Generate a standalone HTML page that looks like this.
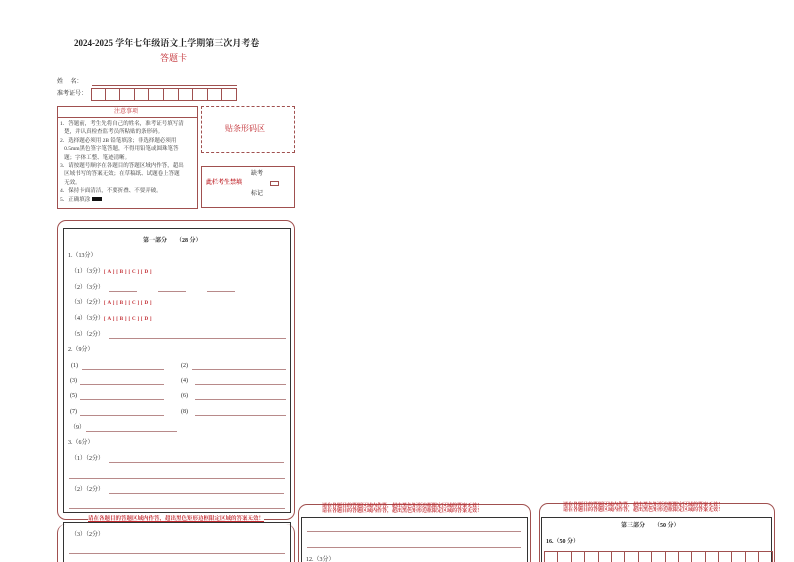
<!DOCTYPE html>
<html><head><meta charset="utf-8"><style>
*{margin:0;padding:0;box-sizing:border-box}
html,body{width:794px;height:562px;overflow:hidden}
body{background:#fff;position:relative;font-family:"Liberation Serif","Noto Serif CJK SC","Noto Sans CJK SC",serif;color:#222}
.a{position:absolute;white-space:nowrap}
.t{font-size:6px;line-height:7px}
.r{color:#c0272d}
.ln{position:absolute;height:0;border-top:1px solid #b88a8a}
.box{position:absolute;border:1px solid #a0504f}
.blk{position:absolute;border:1.2px solid #333}
.opt{color:#c0272d;font-size:5px;font-weight:bold;letter-spacing:0.3px}
.g{width:13.4px;height:20px;border-right:1px solid #a0504f}
</style></head><body>
<div class="a" style="left:74px;top:36px;font-size:9px;font-weight:bold">2024-2025 学年七年级语文上学期第三次月考卷</div>
<div class="a r" style="left:160px;top:51px;font-size:9px">答题卡</div>
<div class="a t" style="left:57px;top:79px">姓&nbsp;&nbsp;&nbsp;&nbsp;&nbsp;名：</div>
<div class="ln" style="left:92px;top:85px;width:145px;border-color:#a0504f"></div>
<div class="a t" style="left:57px;top:91px">准考证号：</div>
<div class="a" style="left:91px;top:88px;display:flex">
<div style="width:14.6px;height:13px;border:1px solid #a0504f"></div><div style="width:14.6px;height:13px;border:1px solid #a0504f;border-left:0"></div><div style="width:14.6px;height:13px;border:1px solid #a0504f;border-left:0"></div><div style="width:14.6px;height:13px;border:1px solid #a0504f;border-left:0"></div><div style="width:14.6px;height:13px;border:1px solid #a0504f;border-left:0"></div><div style="width:14.6px;height:13px;border:1px solid #a0504f;border-left:0"></div><div style="width:14.6px;height:13px;border:1px solid #a0504f;border-left:0"></div><div style="width:14.6px;height:13px;border:1px solid #a0504f;border-left:0"></div><div style="width:14.6px;height:13px;border:1px solid #a0504f;border-left:0"></div><div style="width:14.6px;height:13px;border:1px solid #a0504f;border-left:0"></div></div>
<div class="box" style="left:57px;top:106px;width:141px;height:103px"></div>
<div class="ln" style="left:57px;top:117px;width:141px;border-color:#a0504f"></div>
<div class="a r t" style="left:114px;top:109px">注意事项</div>
<div class="a" style="left:60px;top:120px;font-size:5.5px;line-height:8.4px;color:#333">1．答题前，考生先将自己的姓名，准考证号填写清<br>&nbsp;&nbsp;&nbsp;楚，并认真检查监考员所粘贴的条形码。<br>2．选择题必须用 2B 铅笔填涂；非选择题必须用<br>&nbsp;&nbsp;&nbsp;0.5mm黑色签字笔答题，不得用铅笔或圆珠笔答<br>&nbsp;&nbsp;&nbsp;题；字体工整、笔迹清晰。<br>3．请按题号顺序在各题目的答题区域内作答，超出<br>&nbsp;&nbsp;&nbsp;区域书写的答案无效；在草稿纸、试题卷上答题<br>&nbsp;&nbsp;&nbsp;无效。<br>4．保持卡面清洁，不要折叠、不要弄破。<br>5．正确填涂 <span style="display:inline-block;width:10px;height:4px;background:#111"></span></div>
<div class="a" style="left:201px;top:106px;width:94px;height:47px;border:1px dashed #a0504f"></div>
<div class="a r" style="left:225px;top:123px;font-size:8px">贴条形码区</div>
<div class="box" style="left:201px;top:166px;width:94px;height:42px"></div>
<div class="a t" style="left:251px;top:171px">缺考</div>
<div class="a r t" style="left:206px;top:180px;font-weight:bold">此栏考生禁填</div>
<div class="a" style="left:270px;top:181px;width:9px;height:5px;border:1px solid #a0504f"></div>
<div class="a t" style="left:251px;top:191px">标记</div>

<div class="box" style="left:57px;top:220px;width:238px;height:300px;border-radius:9px"></div>
<div class="blk" style="left:63px;top:228px;width:228px;height:285px;background:#fff"></div>
<div class="a t" style="left:143px;top:238px;font-weight:bold">第一部分&nbsp;&nbsp;&nbsp;&nbsp;&nbsp;&nbsp;（28 分）</div>
<div class="a t" style="left:68px;top:253px">1.（13分）</div>
<div class="a t" style="left:71px;top:269px">（1）（3分）<span class="opt">[ A ] [ B ] [ C ] [ D ]</span></div>
<div class="a t" style="left:71px;top:285px">（2）（3分）</div>
<div class="ln" style="left:109px;top:291px;width:28px"></div><div class="ln" style="left:158px;top:291px;width:28px"></div><div class="ln" style="left:207px;top:291px;width:28px"></div>
<div class="a t" style="left:71px;top:300px">（3）（2分）<span class="opt">[ A ] [ B ] [ C ] [ D ]</span></div>
<div class="a t" style="left:71px;top:316px">（4）（3分）<span class="opt">[ A ] [ B ] [ C ] [ D ]</span></div>
<div class="a t" style="left:71px;top:332px">（5）（2分）</div>
<div class="ln" style="left:109px;top:338px;width:177px"></div>
<div class="a t" style="left:68px;top:347px">2.（9分）</div>
<div class="a t" style="left:71px;top:363px">(1)</div><div class="ln" style="left:82px;top:369px;width:82px"></div>
<div class="a t" style="left:181px;top:363px">(2)</div><div class="ln" style="left:192px;top:369px;width:94px"></div>
<div class="a t" style="left:70px;top:378px">(3)</div><div class="ln" style="left:80px;top:384px;width:84px"></div>
<div class="a t" style="left:181px;top:378px">(4)</div><div class="ln" style="left:195px;top:384px;width:91px"></div>
<div class="a t" style="left:70px;top:393px">(5)</div><div class="ln" style="left:80px;top:399px;width:84px"></div>
<div class="a t" style="left:181px;top:393px">(6)</div><div class="ln" style="left:195px;top:399px;width:91px"></div>
<div class="a t" style="left:70px;top:409px">(7)</div><div class="ln" style="left:80px;top:415px;width:84px"></div>
<div class="a t" style="left:181px;top:409px">(8)</div><div class="ln" style="left:195px;top:415px;width:91px"></div>
<div class="a t" style="left:70px;top:425px">（9）</div><div class="ln" style="left:86px;top:431px;width:91px"></div>
<div class="a t" style="left:68px;top:440px">3.（6分）</div>
<div class="a t" style="left:71px;top:456px">（1）（2分）</div><div class="ln" style="left:109px;top:462px;width:175px"></div>
<div class="ln" style="left:69px;top:478px;width:216px"></div>
<div class="a t" style="left:71px;top:487px">（2）（2分）</div><div class="ln" style="left:109px;top:493px;width:175px"></div>
<div class="ln" style="left:69px;top:508px;width:216px"></div>
<div class="a" style="left:88px;top:514px;font-size:5.5px;color:#c0272d;font-weight:bold;text-decoration:underline;background:#fff">请在各题目的答题区域内作答，超出黑色矩形边框限定区域的答案无效！</div>
<div class="box" style="left:57px;top:524px;width:238px;height:40px;border-radius:9px 9px 0 0;border-top:none"></div>
<div class="blk" style="left:63px;top:522px;width:228px;height:42px"></div>
<div class="a t" style="left:71px;top:532px">（3）（2分）</div>
<div class="ln" style="left:69px;top:553px;width:216px"></div>

<div class="box" style="left:298px;top:504px;width:233px;height:60px;border-radius:9px 9px 0 0"></div>
<div class="a" style="left:322px;top:504px;font-size:5px;line-height:5px;color:#c0272d;font-weight:bold">请在各题目的答题区域内作答，超出黑色矩形边框限定区域的答案无效！<br>请在各题目的答题区域内作答，超出黑色矩形边框限定区域的答案无效！</div>
<div class="blk" style="left:301px;top:517px;width:227px;height:47px"></div>
<div class="ln" style="left:307px;top:531px;width:214px"></div>
<div class="ln" style="left:307px;top:547px;width:214px"></div>
<div class="a t" style="left:306px;top:557px">12.（3分）</div>

<div class="box" style="left:539px;top:503px;width:236px;height:61px;border-radius:9px 9px 0 0"></div>
<div class="a" style="left:563px;top:503px;font-size:5px;line-height:5px;color:#c0272d;font-weight:bold">请在各题目的答题区域内作答，超出黑色矩形边框限定区域的答案无效！<br>请在各题目的答题区域内作答，超出黑色矩形边框限定区域的答案无效！</div>
<div class="blk" style="left:541px;top:517px;width:231px;height:47px"></div>
<div class="a t" style="left:621px;top:523px;font-weight:bold">第三部分&nbsp;&nbsp;&nbsp;&nbsp;&nbsp;&nbsp;（50 分）</div>
<div class="a t" style="left:546px;top:539px;font-weight:bold">16.（50 分）</div>
<div class="a" style="left:544px;top:551px;display:flex;border-left:1px solid #a0504f;border-top:1px solid #a0504f">
<div class="g"></div><div class="g"></div><div class="g"></div><div class="g"></div><div class="g"></div><div class="g"></div><div class="g"></div><div class="g"></div><div class="g"></div><div class="g"></div><div class="g"></div><div class="g"></div><div class="g"></div><div class="g"></div><div class="g"></div><div class="g"></div><div class="g"></div></div>
</body></html>
